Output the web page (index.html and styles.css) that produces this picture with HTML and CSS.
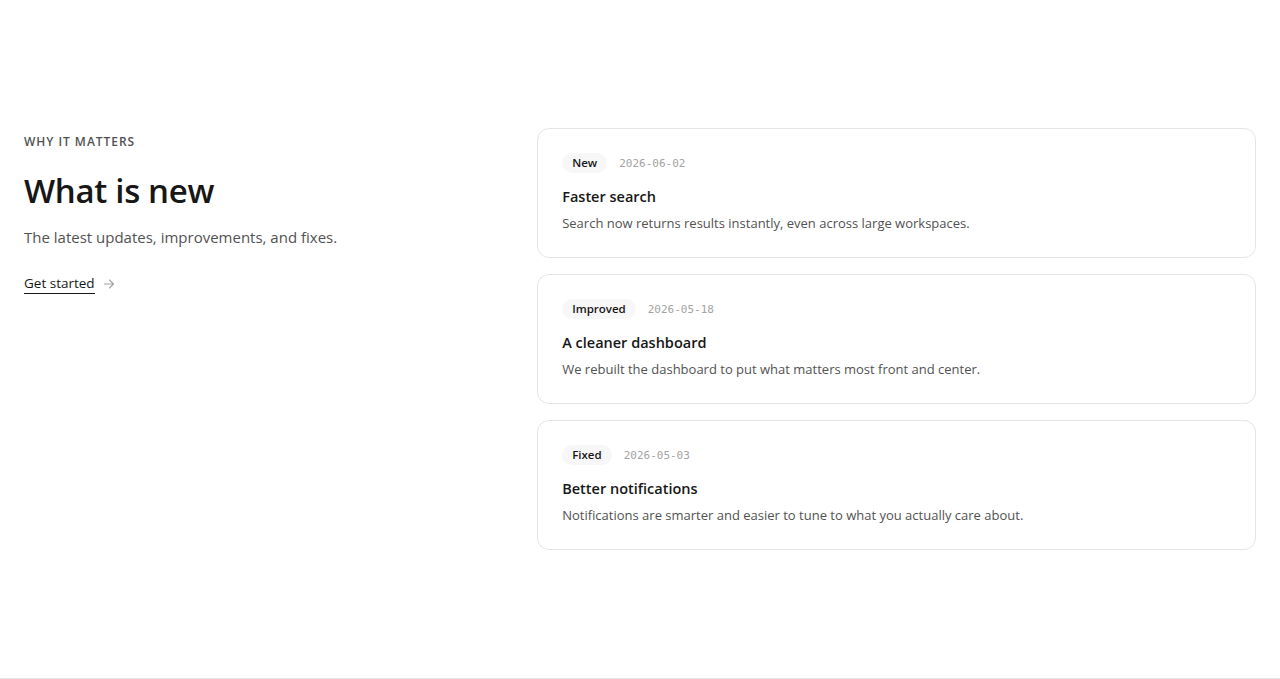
FILE: index.html
```html
<!DOCTYPE html>
<html lang="en">
<head>
<meta charset="utf-8">
<title>What is new</title>
<link rel="stylesheet" href="styles.css">
</head>
<body>
<section class="section">
  <div class="grid">
    <div class="intro">
      <p class="eyebrow">Why it matters</p>
      <h1 class="title">What is new</h1>
      <p class="lead">The latest updates, improvements, and fixes.</p>
      <a class="link" href="#"><span class="link-text">Get started</span><svg class="arrow" width="12" height="12" viewBox="0 0 12 12" aria-hidden="true"><path d="M1.5 6h9M6.5 2l4 4-4 4" fill="none" stroke="currentColor" stroke-width="1.1" stroke-linecap="round" stroke-linejoin="round"/></svg></a>
    </div>
    <div class="list">
      <article class="card">
        <div class="meta"><span class="badge">New</span><time class="date">2026-06-02</time></div>
        <h3 class="card-title">Faster search</h3>
        <p class="card-desc">Search now returns results instantly, even across large workspaces.</p>
      </article>
      <article class="card">
        <div class="meta"><span class="badge">Improved</span><time class="date">2026-05-18</time></div>
        <h3 class="card-title">A cleaner dashboard</h3>
        <p class="card-desc">We rebuilt the dashboard to put what matters most front and center.</p>
      </article>
      <article class="card">
        <div class="meta"><span class="badge">Fixed</span><time class="date">2026-05-03</time></div>
        <h3 class="card-title">Better notifications</h3>
        <p class="card-desc">Notifications are smarter and easier to tune to what you actually care about.</p>
      </article>
    </div>
  </div>
</section>
</body>
</html>
```

FILE: styles.css
```css
* { box-sizing: border-box; }
html, body { margin: 0; padding: 0; background: #fff; }
body {
  font-family: "Open Sans", "Noto Sans", sans-serif;
  color: #171717;
}
.section {
  padding: 128px 24px;
  border-bottom: 1px solid #e5e5e5;
}
.grid {
  display: grid;
  grid-template-columns: 2fr 3fr;
  gap: 34px;
  align-items: start;
}
.eyebrow {
  margin: 0;
  font-size: 12px;
  line-height: 28px;
  font-weight: 600;
  letter-spacing: 0.08em;
  text-transform: uppercase;
  color: #525252;
}
.title {
  margin: 13px 0 0;
  font-size: 33px;
  line-height: 44px;
  font-weight: 600;
  letter-spacing: -0.01em;
  color: #171717;
}
.lead {
  margin: 12px 0 0;
  font-size: 15px;
  line-height: 24px;
  color: #525252;
}
.link {
  display: inline-flex;
  align-items: center;
  gap: 8px;
  margin-top: 25px;
  text-decoration: none;
  color: #171717;
  font-size: 13.5px;
  font-weight: 500;
}
.link-text {
  border-bottom: 1px solid #171717;
  line-height: 19px;
}
.arrow {
  color: #a3a3a3;
  display: block;
}
.list {
  display: flex;
  flex-direction: column;
  gap: 16px;
}
.card {
  border: 1px solid #e5e5e5;
  border-radius: 12px;
  padding: 24px;
  background: #fff;
}
.meta {
  display: flex;
  align-items: center;
  gap: 12px;
}
.badge {
  display: inline-block;
  padding: 0 10px;
  line-height: 20px;
  border-radius: 999px;
  background: #f7f7f7;
  font-size: 11.5px;
  font-weight: 600;
  color: #171717;
}
.date {
  font-family: "DejaVu Sans Mono", "Liberation Mono", monospace;
  font-size: 11px;
  color: #a3a3a3;
}
.card-title {
  margin: 12px 0 0;
  font-size: 14.5px;
  line-height: 24px;
  font-weight: 600;
  color: #171717;
}
.card-desc {
  margin: 4px 0 0;
  font-size: 13px;
  line-height: 20px;
  color: #525252;
}
```
